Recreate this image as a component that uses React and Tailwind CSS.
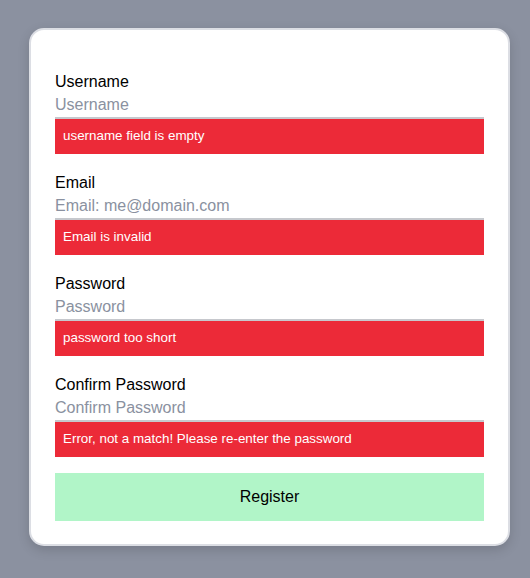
const FIELDS = [
  { label: "Username", placeholder: "Username", type: "text", error: "username field is empty" },
  { label: "Email", placeholder: "Email: me@domain.com", type: "email", error: "Email is invalid" },
  { label: "Password", placeholder: "Password", type: "password", error: "password too short" },
  {
    label: "Confirm Password",
    placeholder: "Confirm Password",
    type: "password",
    error: "Error, not a match! Please re-enter the password",
  },
];

function Field({ label, placeholder, type, error }) {
  return (
    <div className="flex flex-col">
      <label className="pt-px text-base leading-[23px] text-black">{label}</label>
      <input
        type={type}
        placeholder={placeholder}
        className="h-[26px] w-full border-b-2 border-[#c6c8cd] bg-white text-base text-black placeholder:text-[#8a91a0] outline-none"
      />
      <div className="flex h-[35px] items-center bg-[#ec2a38] px-2 text-[13.4px] text-white">{error}</div>
    </div>
  );
}

export default function App() {
  return (
    <div
      className="flex min-h-[578px] w-[530px] bg-[#8b91a0] pl-[29px] pt-[28px]"
      style={{ fontFamily: "'Liberation Sans', Arial, sans-serif" }}
    >
      <form
        onSubmit={(e) => e.preventDefault()}
        className="flex h-[518px] w-[481px] flex-col gap-4 rounded-[15px] border-2 border-[#dcdee4] bg-white pl-[24px] pr-[24px] pt-[39px] shadow-[0_4px_12px_rgba(0,0,0,0.15)]"
      >
        {FIELDS.map((f) => (
          <Field key={f.label} {...f} />
        ))}
        <button type="submit" className="h-12 w-full bg-[#b1f5c8] text-base text-black">
          Register
        </button>
      </form>
    </div>
  );
}
